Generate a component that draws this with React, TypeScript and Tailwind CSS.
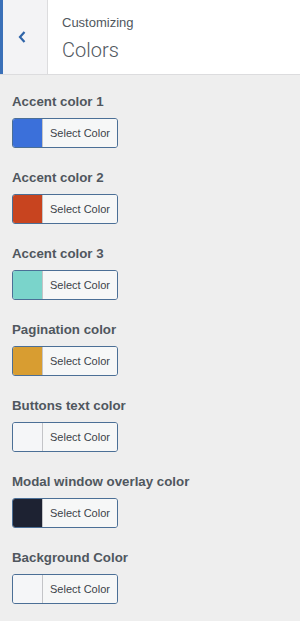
import React from 'react';

const items = [
    { label: 'Accent color 1', color: '#3b70da' },
    { label: 'Accent color 2', color: '#c8441f' },
    { label: 'Accent color 3', color: '#7ad4cb' },
    { label: 'Pagination color', color: '#d89d31' },
    { label: 'Buttons text color', color: '#f5f6f8' },
    { label: 'Modal window overlay color', color: '#1d2232' },
    { label: 'Background Color', color: '#f5f6f8' },
];

export default function App() {
    return (
        <div className="w-[300px] h-[621px] bg-[#eeeeee] overflow-hidden" style={{ fontFamily: '"Liberation Sans", Arial, sans-serif' }}>
            <div className="flex h-[75px] bg-white border-b border-[#dcdcde]">
                <button className="w-[48px] shrink-0 flex items-center justify-center bg-[#f3f3f5] border-l-[3px] border-l-[#3a70b8] border-r border-r-[#dcdcde]">
                    <svg width="8" height="12" viewBox="0 0 8 12" className="ml-[-6px]">
                        <path d="M6.5 1 L2 6 L6.5 11" fill="none" stroke="#2f64a8" strokeWidth="2.2" />
                    </svg>
                </button>
                <div className="flex flex-col pl-[14px] pt-[15px]">
                    <span className="text-[13px] leading-[16px] text-[#50575e]">Customizing</span>
                    <span className="text-[20px] leading-[26px] mt-[6px] font-light text-[#50575e] font-['Roboto',sans-serif]">Colors</span>
                </div>
            </div>
            <div className="px-[12px] pt-[17px]">
                {items.map(item => (
                    <div key={item.label} className="mb-[20px]">
                        <div className="text-[13.3px] leading-[20px] font-bold text-[#50575e]">{item.label}</div>
                        <button className="mt-[6px] flex h-[30px] w-[106px] rounded-[3px] border border-[#4b6f96] overflow-hidden">
                            <span className="w-[30px] h-full border-r border-[#c3c4c7]" style={{ background: item.color }} />
                            <span className="flex-1 h-full bg-[#f6f7f7] flex items-center justify-center text-[11px] text-[#3c434a]">Select Color</span>
                        </button>
                    </div>
                ))}
            </div>
        </div>
    );
}
